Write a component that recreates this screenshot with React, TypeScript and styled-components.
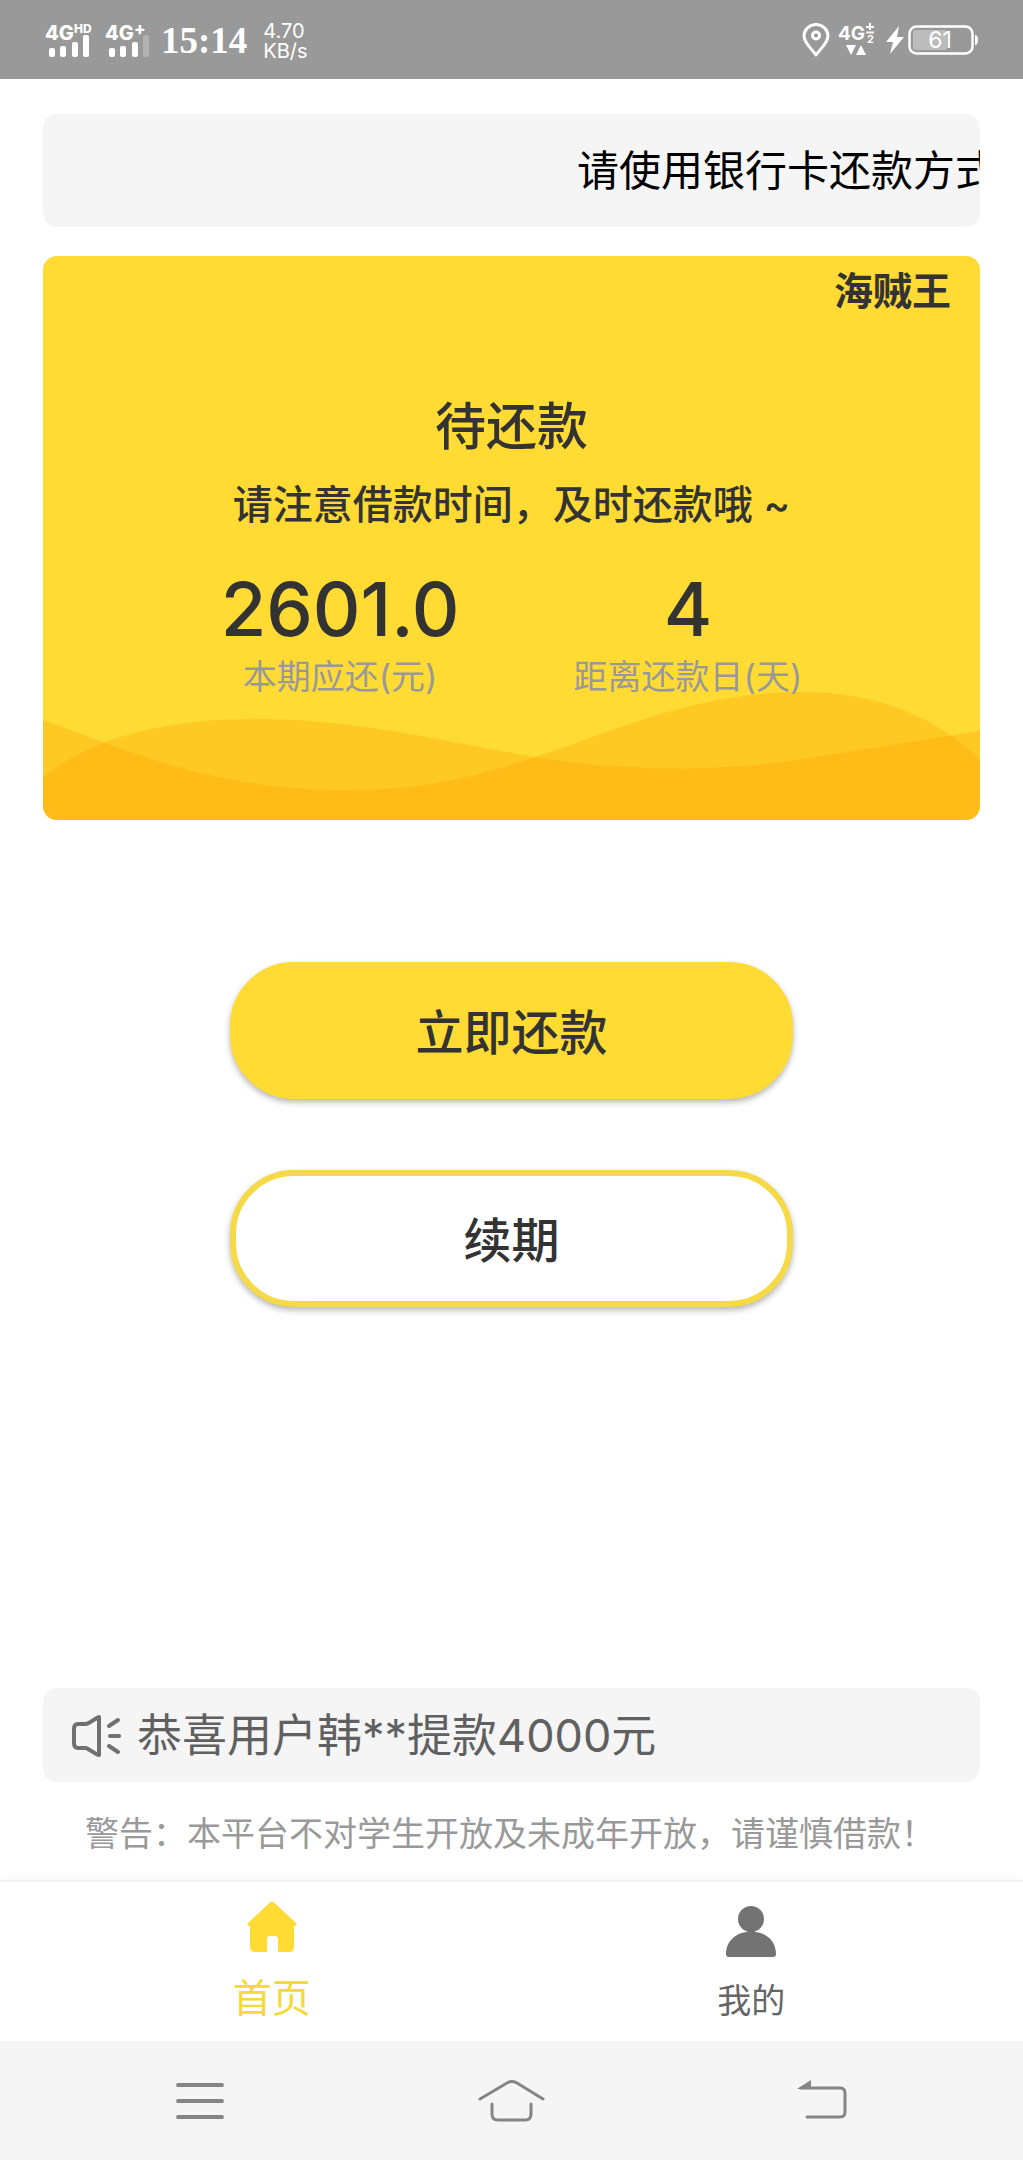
import React from "react";
import styled, { createGlobalStyle } from "styled-components";

const GlobalStyle = createGlobalStyle`
  *, *::before, *::after { box-sizing: border-box; }
  html, body, #root { height: 100%; }
  body {
    margin: 0;
    background: #fff;
    color: #333;
    font-family: Inter, "Noto Sans CJK SC", sans-serif;
  }
  h1, p, dl, dd, dt { margin: 0; font-weight: inherit; }
  button { font: inherit; color: inherit; cursor: pointer; }
  a { color: inherit; text-decoration: none; }
  svg { display: block; flex: none; }
`;

const Screen = styled.div`
  min-height: 100%;
  display: flex;
  flex-direction: column;
`;

const StatusBar = styled.header`
  height: 79px;
  padding: 0 45px;
  display: flex;
  align-items: center;
  justify-content: space-between;
  background: #999;
  color: #fff;
`;

const StatusGroup = styled.div<{ $gap: number }>`
  display: flex;
  align-items: center;
  gap: ${(p) => p.$gap}px;
`;

const Clock = styled.time`
  margin-left: 2px;
  padding-top: 2px;
  font: bold 37px/48px "Liberation Serif", serif;
`;

const Speed = styled.span`
  margin-left: 6px;
  padding-top: 2px;
  display: flex;
  flex-direction: column;
  font-size: 20px;
  line-height: 20px;
`;

const SvgText = styled.text<{ $size: number; $weight?: number }>`
  font-family: Inter, sans-serif;
  font-size: ${(p) => p.$size}px;
  font-weight: ${(p) => p.$weight ?? 700};
  fill: #fff;
`;

const Main = styled.main`
  flex: 1;
  display: flex;
  flex-direction: column;
  padding: 35px 43px 22px;
`;

const Notice = styled.div`
  height: 113px;
  padding-left: 534px;
  display: flex;
  align-items: center;
  overflow: hidden;
  white-space: nowrap;
  border-radius: 14px;
  background: #f5f5f5;
  color: #000;
  font-size: 42px;
  line-height: 56px;
`;

const Card = styled.section`
  position: relative;
  height: 564px;
  margin-top: 29px;
  overflow: hidden;
  border-radius: 14px;
  background: #ffdb33;
  text-align: center;
`;

const Waves = styled.svg`
  position: absolute;
  left: 0;
  bottom: 0;
  width: 100%;
  height: 130px;
`;

const CardBody = styled.div`
  position: relative;
  display: flex;
  flex-direction: column;
`;

const Brand = styled.p`
  padding: 7px 29px 0;
  text-align: right;
  font-size: 39px;
  line-height: 56px;
  font-weight: 700;
`;

const Title = styled.h1`
  margin-top: 72px;
  font-size: 51px;
  line-height: 72px;
  font-weight: 500;
`;

const Hint = styled.p`
  margin-top: 14px;
  font-size: 40px;
  line-height: 56px;
  font-weight: 500;
`;

const Figures = styled.dl`
  margin-top: 32px;
  display: flex;
  justify-content: center;
  gap: 114px;
`;

const Figure = styled.div`
  display: flex;
  flex-direction: column-reverse;
  align-items: center;
`;

const FigureValue = styled.dd`
  font-size: 74px;
  line-height: 88px;
  font-weight: 500;
`;

const FigureLabel = styled.dt`
  font-size: 34px;
  line-height: 48px;
  color: #999;
`;

const Actions = styled.div`
  margin-top: 142px;
  display: flex;
  flex-direction: column;
  align-items: center;
  gap: 71px;
`;

const ActionButton = styled.button<{ $outlined?: boolean }>`
  width: 60%;
  height: 137px;
  padding: 4px 0 0;
  border: 6px solid ${(p) => (p.$outlined ? "#f5d947" : "#ffdb33")};
  border-radius: 64px;
  background: ${(p) => (p.$outlined ? "#fff" : "#ffdb33")};
  box-shadow: 0 3px 6px rgba(0, 0, 0, 0.3);
  font-size: 48px;
  line-height: 64px;
  font-weight: 500;
`;

const Ticker = styled.div`
  height: 94px;
  margin-top: auto;
  padding: 2px 28px 0;
  display: flex;
  align-items: center;
  gap: 15px;
  border-radius: 14px;
  background: #f5f5f5;
  color: #606060;
  font-size: 45px;
  line-height: 64px;
`;

const Warning = styled.p`
  margin-top: 28px;
  padding: 0 42px;
  color: #999;
  font-size: 34px;
  line-height: 48px;
`;

const TabBar = styled.nav`
  height: 161px;
  padding: 0 32px;
  display: flex;
  border-top: 2px solid #f2f2f2;
  box-shadow: 0 -3px 8px rgba(0, 0, 0, 0.03);
`;

const Tab = styled.a<{ $active?: boolean }>`
  flex: 1;
  padding-bottom: ${(p) => (p.$active ? 15 : 12)}px;
  display: flex;
  flex-direction: column;
  align-items: center;
  justify-content: flex-end;
  gap: ${(p) => (p.$active ? 18 : 16)}px;
  color: ${(p) => (p.$active ? "#f5d936" : "#666")};
  font-size: ${(p) => (p.$active ? 39 : 34)}px;
  line-height: 56px;
`;

const SystemNav = styled.footer`
  height: 119px;
  padding: 0 176px;
  display: flex;
  align-items: center;
  justify-content: space-between;
  background: #f5f5f5;
`;

const NavButton = styled.button`
  padding: 0;
  border: 0;
  background: none;
`;

const Signal = ({ label, sup, weak }: { label: string; sup: string; weak?: boolean }) => (
  <svg width={weak ? 44 : 50} height="46" viewBox={`0 -6 ${weak ? 44 : 50} 46`} role="img" aria-label={label + sup}>
    <SvgText x="0" y="17" $size={20} $weight={800}>{label}</SvgText>
    <SvgText x="29" y={weak ? 12 : 10} $size={weak ? 17 : 12} $weight={800}>{sup}</SvgText>
    <g fill="#fff">
      <rect x="4" y="25" width="6" height="9" rx="2" />
      <rect x="15" y="23" width="6" height="11" rx="2" />
      <rect x="27" y="19" width="6" height="15" rx="2" />
      <rect x="38" y="12" width="6" height="22" rx="2" opacity={weak ? 0.25 : 1} />
    </g>
  </svg>
);

export default function App() {
  return (
    <>
      <GlobalStyle />
      <Screen>
        <StatusBar>
          <StatusGroup $gap={10}>
            <Signal label="4G" sup="HD" />
            <Signal label="4G" sup="+" weak />
            <Clock>15:14</Clock>
            <Speed>
              <span>4.70</span>
              <span>KB/s</span>
            </Speed>
          </StatusGroup>
          <StatusGroup $gap={8}>
            <svg width="28" height="34" viewBox="0 0 28 34" fill="none" stroke="#fff" strokeWidth="3">
              <path d="M14 32C10 26 2 20 2 13a12 11.500 0 0 1 24 0c0 7-8 13-12 19Z" strokeLinejoin="round" />
              <circle cx="14" cy="12.500" r="3.500" />
            </svg>
            <svg width="40" height="44" viewBox="0 -6 40 44">
              <SvgText x="0" y="16" $size={19} $weight={700}>4G</SvgText>
              <path d="M28 3h8M32-1v7M28 8.500h8" stroke="#fff" strokeWidth="2" />
              <SvgText x="29" y="19" $size={11} $weight={700}>2</SvgText>
              <path d="M8 21h10l-5 10ZM18 31h10l-5-10Z" fill="#fff" />
            </svg>
            <StatusGroup $gap={4}>
              <svg width="18" height="28" viewBox="0 0 18 28" fill="#fff">
                <path d="M13 0 0 16h7L4 28 18 11h-7Z" />
              </svg>
              <svg width="70" height="30" viewBox="0 0 70 30">
                <rect x="5" y="5" width="34" height="20" rx="3" fill="#fff" opacity="0.35" />
                <rect x="1.500" y="1.500" width="63" height="27" rx="7" fill="none" stroke="#fff" strokeWidth="2.500" />
                <path d="M67 10q3 0 3 5t-3 5Z" fill="#fff" />
                <SvgText x="32" y="23" $size={23} $weight={400} textAnchor="middle">61</SvgText>
              </svg>
            </StatusGroup>
          </StatusGroup>
        </StatusBar>

        <Main>
          <Notice>请使用银行卡还款方式</Notice>

          <Card>
            <Waves viewBox="0 0 937 130" preserveAspectRatio="none" fill="rgb(255,160,0)" fillOpacity="0.31">
              <path d="M0 87C45 52 110 29 211 29C320 29 400 52 492 67C600 84 690 80 760 69C830 58 890 48 937 41V130H0Z" />
              <path d="M0 30C90 62 170 100 303 100C390 100 440 84 492 67C570 42 650 2 759 2C840 2 900 32 937 70V130H0Z" />
            </Waves>
            <CardBody>
              <Brand>海贼王</Brand>
              <Title>待还款</Title>
              <Hint>请注意借款时间，及时还款哦 ~</Hint>
              <Figures>
                <Figure>
                  <FigureLabel>本期应还(元)</FigureLabel>
                  <FigureValue>2601.0</FigureValue>
                </Figure>
                <Figure>
                  <FigureLabel>距离还款日(天)</FigureLabel>
                  <FigureValue>4</FigureValue>
                </Figure>
              </Figures>
            </CardBody>
          </Card>

          <Actions>
            <ActionButton type="button">立即还款</ActionButton>
            <ActionButton type="button" $outlined>续期</ActionButton>
          </Actions>

          <Ticker>
            <svg width="51" height="44" viewBox="0 0 51 44" fill="none" stroke="#707070" strokeWidth="4" strokeLinecap="round" strokeLinejoin="round">
              <path d="M28 3v38c-5-1-9-6-13-7H7q-4 0-4-5V15q0-5 4-5h8c5-1 9-6 13-7Z" />
              <path d="M38 12l9-6M39 22h9M38 32l9 6" />
            </svg>
            <span>恭喜用户韩**提款4000元</span>
          </Ticker>
          <Warning>警告：本平台不对学生开放及未成年开放，请谨慎借款！</Warning>
        </Main>

        <TabBar>
          <Tab href="#home" $active>
            <svg width="50" height="51" viewBox="0 0 50 51" fill="#ffdb33">
              <path d="M23 1.500q2-2 4 0L49 22q2 3-2 3v21q0 5-5 5H31V39q0-4-3-4h-5q-3 0-3 4v12H8q-5 0-5-5V25q-4 0-2-3Z" />
            </svg>
            首页
          </Tab>
          <Tab href="#mine">
            <svg width="52" height="51" viewBox="0 0 52 51" fill="#737373">
              <ellipse cx="26" cy="13" rx="13" ry="13" />
              <path d="M22 20h8v6c12 1 21 10 21 22q0 3-3 3H4q-3 0-3-3c0-12 9-21 21-22Z" />
            </svg>
            我的
          </Tab>
        </TabBar>

        <SystemNav>
          <NavButton type="button" aria-label="菜单">
            <svg width="48" height="42" viewBox="0 0 48 42" stroke="#858585" strokeWidth="4" strokeLinecap="round">
              <path d="M2 5h44M2 21h44M2 37h44" />
            </svg>
          </NavButton>
          <NavButton type="button" aria-label="主页">
            <svg width="68" height="42" viewBox="0 0 68 42" fill="none" stroke="#858585" strokeWidth="3" strokeLinecap="round">
              <path d="M3 19 30 3q5-3 10 0l26 16" />
              <path d="M15 24v10q0 6 6 6h27q6 0 6-6V24" />
            </svg>
          </NavButton>
          <NavButton type="button" aria-label="返回">
            <svg width="50" height="42" viewBox="0 0 50 42" fill="none" stroke="#858585" strokeWidth="3" strokeLinecap="round">
              <path d="M4 8h39q5 0 5 5v19q0 5-5 5H10" />
              <path d="M0 9 14 0v9Z" fill="#858585" stroke="none" />
            </svg>
          </NavButton>
        </SystemNav>
      </Screen>
    </>
  );
}
